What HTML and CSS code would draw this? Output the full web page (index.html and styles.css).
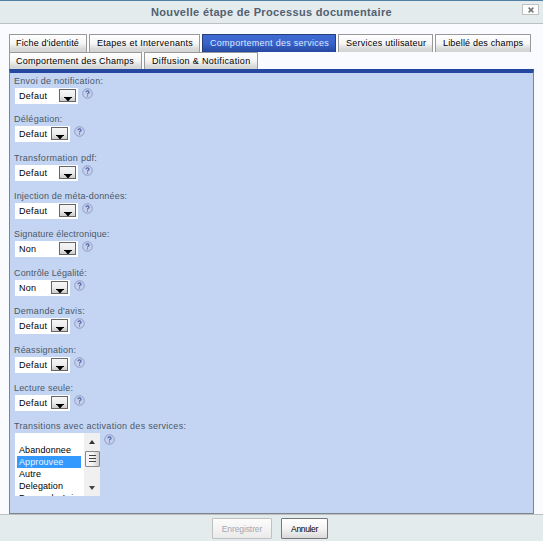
FILE: index.html
```
<!DOCTYPE html>
<html lang="fr">
<head>
<meta charset="utf-8">
<title>Nouvelle étape de Processus documentaire</title>
<link rel="stylesheet" href="styles.css">
</head>
<body>
<svg width="0" height="0" class="defs"><defs>
<symbol id="help" viewBox="0 0 11 11"><circle cx="5.5" cy="5.5" r="4.8" fill="#c6d0ed" stroke="#8e9dc8"/><path d="M3.9 4.2Q4 2.9 5.5 2.9T7.1 4.2Q7.1 4.9 6.2 5.3Q5.5 5.7 5.5 6.5M5.5 7.5V8.6" fill="none" stroke="#4a62a4" stroke-width="1.1"/></symbol>
<symbol id="arrow" viewBox="0 0 8 4"><path d="M0 0H8V1H7L4.5 4H3.5L1 1H0Z" fill="#000"/></symbol>
</defs></svg>
<header class="header"><h1 class="title">Nouvelle étape de Processus documentaire</h1>
<button class="close"><svg width="6" height="6" viewBox="0 0 6 6"><path d="M.6 .6L5.4 5.4M5.4 .6L.6 5.4" stroke="#777" stroke-width="1.5"/></svg></button></header>
<main class="main">
<nav class="tabs">
<div class="tab-row">
<a class="tab t1">Fiche d'identité</a><a class="tab t2">Etapes et Intervenants</a><a class="tab t3 active">Comportement des services</a><a class="tab t4">Services utilisateur</a><a class="tab t5">Libellé des champs</a>
</div>
<div class="tab-row second">
<a class="tab t6">Comportement des Champs</a><a class="tab t7">Diffusion &amp; Notification</a>
</div>
</nav>
<section class="panel">
<div class="field"><label>Envoi de notification:</label><div class="control"><div class="select wide"><span>Defaut</span><i class="drop"><svg><use href="#arrow"/></svg></i></div><svg class="help"><use href="#help"/></svg></div></div>
<div class="field"><label>Délégation:</label><div class="control"><div class="select"><span>Defaut</span><i class="drop"><svg><use href="#arrow"/></svg></i></div><svg class="help"><use href="#help"/></svg></div></div>
<div class="field"><label>Transformation pdf:</label><div class="control"><div class="select wide"><span>Defaut</span><i class="drop"><svg><use href="#arrow"/></svg></i></div><svg class="help"><use href="#help"/></svg></div></div>
<div class="field"><label class="snug">Injection de méta-données:</label><div class="control"><div class="select wide"><span>Defaut</span><i class="drop"><svg><use href="#arrow"/></svg></i></div><svg class="help"><use href="#help"/></svg></div></div>
<div class="field"><label class="tight">Signature électronique:</label><div class="control"><div class="select wide"><span>Non</span><i class="drop"><svg><use href="#arrow"/></svg></i></div><svg class="help"><use href="#help"/></svg></div></div>
<div class="field"><label class="tight">Contrôle Légalité:</label><div class="control"><div class="select"><span>Non</span><i class="drop"><svg><use href="#arrow"/></svg></i></div><svg class="help"><use href="#help"/></svg></div></div>
<div class="field"><label>Demande d'avis:</label><div class="control"><div class="select"><span>Defaut</span><i class="drop"><svg><use href="#arrow"/></svg></i></div><svg class="help"><use href="#help"/></svg></div></div>
<div class="field"><label class="snug">Réassignation:</label><div class="control"><div class="select"><span>Defaut</span><i class="drop"><svg><use href="#arrow"/></svg></i></div><svg class="help"><use href="#help"/></svg></div></div>
<div class="field"><label class="snug">Lecture seule:</label><div class="control"><div class="select"><span>Defaut</span><i class="drop"><svg><use href="#arrow"/></svg></i></div><svg class="help"><use href="#help"/></svg></div></div>
<div class="field"><label>Transitions avec activation des services:</label><div class="control">
<div class="listbox"><ul><li></li><li>Abandonnee</li><li class="selected">Approuvee</li><li>Autre</li><li>Delegation</li><li>Demande Avis</li></ul>
<div class="scroll"><svg width="6" height="4" viewBox="0 0 6 4"><path d="M3 0L6 4H0Z" fill="#333"/></svg><i class="thumb"></i><svg class="down" width="6" height="4" viewBox="0 0 6 4"><path d="M0 0H6L3 4Z" fill="#444"/></svg></div></div>
<svg class="help list-help"><use href="#help"/></svg></div></div>
</section>
</main>
<footer class="footer"><button class="btn save" disabled>Enregistrer</button><button class="btn cancel">Annuler</button></footer>
</body>
</html>
```
FILE: styles.css
```
* { box-sizing: border-box; }
body { margin: 0; width: 543px; height: 541px; overflow: hidden; display: flex; flex-direction: column; background: #fafbfe; font-family: "Liberation Sans", sans-serif; font-size: 9px; color: #000; }
svg { display: block; }
.defs { position: absolute; }
.header { position: relative; height: 24px; flex: none; border-top: 1px solid #527fa3; border-bottom: 1px solid #b8c0c0; background: #e3ebec; }
.title { margin: 0; font-size: 11px; line-height: 22px; text-align: center; color: #526071; letter-spacing: .34px; }
.close { position: absolute; right: 4px; top: 3px; width: 17px; height: 11px; padding: 0; border: 1px solid #c2c2c2; background: #fff; display: flex; align-items: center; justify-content: center; }
.main { height: 490px; flex: none; padding: 10px 9px 0; }
.tab-row { display: flex; gap: 2px; height: 18px; }
.tab-row.second { height: 17px; }
.tab { flex: none; border: 1px solid #999; border-bottom: 0; border-radius: 1px 1px 0 0; background: linear-gradient(#fff, #f5f5f5 50%, #dadada 80%, #d4d4d4); line-height: 17px; padding-left: 6px; white-space: nowrap; }
.tab.active { color: #dce8ff; background: linear-gradient(#3e6ad3, #3963ca 50%, #2548a0); border-color: #263e78; }
.t1 { width: 78px; letter-spacing: .17px; }
.t2 { width: 111px; padding-left: 7px; letter-spacing: .27px; }
.t3 { width: 134px; padding-left: 7px; letter-spacing: .28px; }
.t4 { width: 95px; padding-left: 7px; letter-spacing: .24px; }
.t5 { width: 96px; padding-left: 7px; letter-spacing: .18px; }
.t6 { width: 133px; letter-spacing: .24px; }
.t7 { width: 114px; padding-left: 7px; letter-spacing: .34px; }
.panel { width: 525px; height: 445px; background: #c3d5f2; border: 1px solid #7e838c; border-top: 4px solid #2447a0; padding: 1px 0 0 4px; }
.field { height: 38.37px; }
label { display: block; height: 14px; line-height: 14px; color: #4d5868; letter-spacing: .28px; }
label.snug { letter-spacing: .18px; }
label.tight { letter-spacing: .13px; }
.control { display: flex; margin-left: 1px; }
.select { width: 55px; height: 16px; background: #fff; display: flex; align-items: flex-start; line-height: 16px; justify-content: space-between; padding: 0 2px 0 4px; letter-spacing: .31px; }
.select.wide { width: 63px; }
.drop { width: 17px; height: 13px; margin-top: 1px; border: 1px solid #666; background: linear-gradient(#f6f6f6, #eee 50%, #ccc); padding: 7px 0 0 4px; }
.drop svg { width: 8px; height: 4px; }
.help { width: 11px; height: 11px; margin-left: 4px; }
.listbox { display: flex; width: 85px; height: 63px; background: #fff; overflow: hidden; }
.listbox ul { margin: 0; padding: 0 3px 0 2px; width: 69px; list-style: none; letter-spacing: .1px; }
li { height: 12px; line-height: 12px; padding-left: 2px; white-space: nowrap; overflow: hidden; }
li:first-child { height: 11px; }
li.selected { background: #3399ff; color: #eaf5ff; }
.scroll { width: 16px; height: 63px; background: #f0f0f0; display: flex; flex-direction: column; align-items: center; padding-top: 7px; }
.thumb { width: 15px; height: 16px; margin-top: 7px; border: 1px solid #888; border-radius: 1px; background: repeating-linear-gradient(#444 0 1px, transparent 1px 3px) 3px 3px / 7px 7px no-repeat, linear-gradient(90deg, #f4f4f4 50%, #ccc); }
.down { margin-top: 19px; }
.list-help { margin-top: 1px; }
.footer { height: 27px; border-top: 1px solid #bcc0c0; background: #e3ebec; display: flex; justify-content: center; gap: 9px; padding: 3px 3px 0 0; }
.btn { height: 21px; padding: 0; border: 1px solid #777; border-radius: 1px; background: linear-gradient(#fff, #f4f4f4 50%, #d9d9d9); font: 8.5px "Liberation Sans", sans-serif; letter-spacing: -.1px; color: #000; }
.save { width: 60px; color: #a0a7b0; border-color: #bfc0c0; background: linear-gradient(#fcfcfc, #f2f2f2 60%, #eaeaea); }
.cancel { width: 47px; letter-spacing: -.35px; }
```
